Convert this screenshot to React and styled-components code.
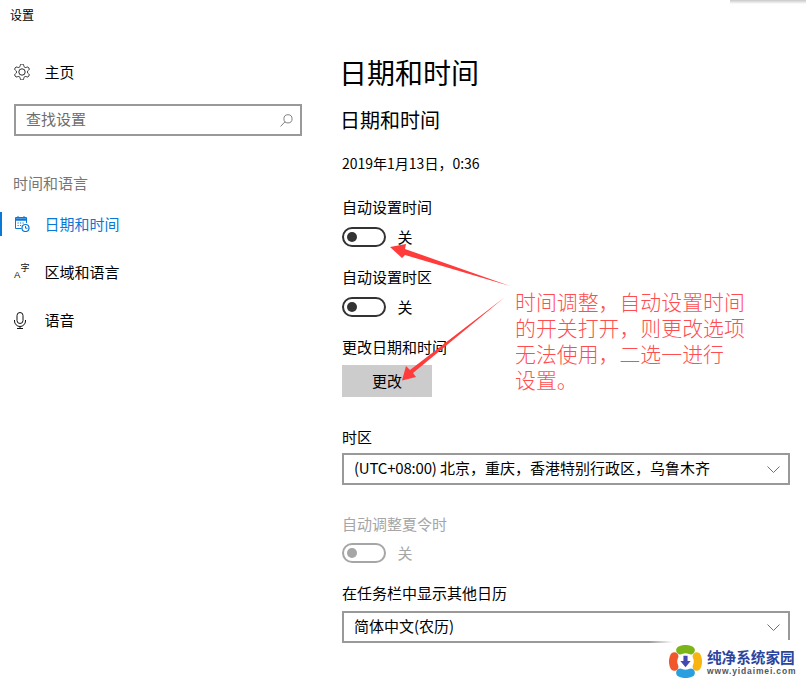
import React from "react";
import styled, { createGlobalStyle } from "styled-components";

const Global = createGlobalStyle`
  html, body { margin: 0; padding: 0; background: #fff; }
  body { font-family: "Noto Sans CJK SC", "Liberation Sans", sans-serif; color: #000; }
  #root { width: 806px; height: 681px; overflow: hidden; position: relative; }
`;

const Page = styled.div`
  display: flex;
  width: 806px;
  height: 681px;
  position: relative;
  overflow: hidden;
  background: #fff;
`;

const Sidebar = styled.aside`
  width: 342px;
  flex: none;
  display: flex;
  flex-direction: column;
`;

const AppTitle = styled.div`
  height: 30px;
  line-height: 30px;
  padding-left: 10px;
  font-size: 12px;
`;

const NavRow = styled.div`
  height: 48px;
  display: flex;
  align-items: center;
  position: relative;
  font-size: 15px;
  color: ${(p) => (p.$active ? "#0a78d7" : "#000")};
  margin-top: ${(p) => p.$mt || 0}px;
`;

const NavIcon = styled.span`
  width: 44.5px;
  padding-left: 14px;
  box-sizing: border-box;
  flex: none;
  display: flex;
  align-items: center;
`;

const NavText = styled.span`
  margin-bottom: 2px;
`;

const ActiveBar = styled.i`
  position: absolute;
  left: 0;
  top: 12px;
  width: 2px;
  height: 24px;
  background: #0a78d7;
`;

const SearchBox = styled.div`
  margin: 8px 0 0 14px;
  width: 288px;
  height: 32px;
  box-sizing: border-box;
  border: 2px solid #999;
  display: flex;
  align-items: center;
  justify-content: space-between;
  padding: 0 7px 0 10px;
  font-size: 15px;
  color: #6d6d6d;
`;

const FieldText = styled.span`
  margin-bottom: 4px;
`;

const SectionLabel = styled.div`
  margin: 35px 0 0 13px;
  height: 24px;
  line-height: 24px;
  font-size: 15px;
  color: #767676;
`;

const LangGlyph = styled.span`
  position: relative;
  display: block;
  width: 16px;
  height: 16px;
  color: #111;
  font-family: "Liberation Sans", sans-serif;
  & > b { position: absolute; left: 0; bottom: 0; font-size: 9.5px; font-weight: 400; line-height: 10px; }
  & > em { position: absolute; left: 6.5px; top: -1px; font-size: 9px; font-style: normal; line-height: 9px; font-family: "Noto Sans CJK SC", sans-serif; }
`;

const Main = styled.main`
  flex: 1;
  display: flex;
  flex-direction: column;
  align-items: flex-start;
`;

const PageTitle = styled.h1`
  margin: 50px 0 0 -3px;
  height: 44px;
  line-height: 44px;
  font-size: 28px;
  font-weight: 400;
`;

const SubTitle = styled.h2`
  margin: 11px 0 0 -2px;
  height: 30px;
  line-height: 30px;
  font-size: 20px;
  font-weight: 400;
`;

const Label = styled.div`
  margin-top: ${(p) => p.$mt}px;
  height: 22px;
  line-height: ${(p) => p.$lh || 21}px;
  font-size: ${(p) => p.$size || 15}px;
  color: ${(p) => (p.$muted ? "#a6a6a6" : "#000")};
  white-space: nowrap;
`;

const ToggleRow = styled.div`
  margin-top: ${(p) => p.$mt}px;
  height: 20px;
  display: flex;
  align-items: center;
  gap: 11.5px;
  font-size: 15px;
  color: ${(p) => (p.$muted ? "#a6a6a6" : "#000")};
`;

const ToggleText = styled.span`
  margin-bottom: 2px;
`;

const Track = styled.span`
  width: 44px;
  height: 20px;
  box-sizing: border-box;
  border: 2px solid ${(p) => (p.$muted ? "#a6a6a6" : "#333")};
  border-radius: 10px;
  display: flex;
  align-items: center;
  padding-left: 3px;
  &::before {
    content: "";
    width: 10px;
    height: 10px;
    border-radius: 50%;
    background: ${(p) => (p.$muted ? "#a6a6a6" : "#333")};
  }
`;

const ChangeButton = styled.div`
  margin-top: 7px;
  width: 90px;
  height: 32px;
  line-height: 32px;
  background: #ccc;
  text-align: center;
  font-size: 15px;
`;

const Select = styled.div`
  margin-top: ${(p) => p.$mt}px;
  width: 448px;
  height: 32px;
  box-sizing: border-box;
  border: 2px solid #999;
  display: flex;
  align-items: center;
  justify-content: space-between;
  padding: 0 8px 0 10px;
  font-size: 15px;
  white-space: nowrap;
`;

const Latin = styled.span`
  letter-spacing: -0.2px;
`;

const Annotation = styled.div`
  position: absolute;
  left: 515px;
  top: 288px;
  font-size: 20.9px;
  line-height: 26px;
  color: #ff4d4f;
  font-weight: 300;
  white-space: pre;
`;

const ArrowLayer = styled.svg`
  position: absolute;
  left: 0;
  top: 0;
  pointer-events: none;
`;

const TopShadow = styled.div`
  position: absolute;
  right: 0;
  top: 0;
  width: 76px;
  height: 4px;
  background: linear-gradient(#c9c9c9, #fff);
`;

const WatermarkMask = styled.div`
  position: absolute;
  right: 0;
  bottom: 0;
  width: 133px;
  height: 41px;
  background: #fff;
  &::before {
    content: "";
    position: absolute;
    right: 100%;
    bottom: 38px;
    width: 24px;
    height: 3px;
    background: linear-gradient(to right, rgba(255, 255, 255, 0), #fff);
  }
`;

const Watermark = styled.div`
  position: absolute;
  left: 669px;
  top: 645px;
  display: flex;
  align-items: center;
  gap: 5px;
`;

const BrandText = styled.div`
  display: flex;
  flex-direction: column;
  margin-top: 1px;
`;

const BrandName = styled.div`
  font-size: 14.6px;
  line-height: 18px;
  font-weight: 700;
  color: #2b459e;
  white-space: nowrap;
`;

const BrandUrl = styled.div`
  font-family: "Liberation Sans", sans-serif;
  font-size: 8.5px;
  line-height: 10px;
  letter-spacing: 0.85px;
  font-weight: 700;
  color: #555;
  white-space: nowrap;
`;

const Gear = () => (
  <svg width="16" height="16" viewBox="2 2 20 20" fill="none" stroke="#222" strokeWidth="1.2" strokeLinejoin="round">
    <path d="M12.2 2h-.44a2 2 0 0 0-2 2v.18a2 2 0 0 1-1 1.73l-.43.25a2 2 0 0 1-2 0l-.15-.08a2 2 0 0 0-2.73.73l-.22.38a2 2 0 0 0 .73 2.73l.15.1a2 2 0 0 1 1 1.72v.51a2 2 0 0 1-1 1.74l-.15.09a2 2 0 0 0-.73 2.73l.22.38a2 2 0 0 0 2.73.73l.15-.08a2 2 0 0 1 2 0l.43.25a2 2 0 0 1 1 1.73V20a2 2 0 0 0 2 2h.44a2 2 0 0 0 2-2v-.18a2 2 0 0 1 1-1.73l.43-.25a2 2 0 0 1 2 0l.15.08a2 2 0 0 0 2.73-.73l.22-.39a2 2 0 0 0-.73-2.73l-.15-.08a2 2 0 0 1-1-1.74v-.5a2 2 0 0 1 1-1.74l.15-.09a2 2 0 0 0 .73-2.73l-.22-.38a2 2 0 0 0-2.73-.73l-.15.08a2 2 0 0 1-2 0l-.43-.25a2 2 0 0 1-1-1.73V4a2 2 0 0 0-2-2z" />
    <circle cx="12" cy="12" r="4" />
  </svg>
);

const SearchIcon = () => (
  <svg width="13" height="13" viewBox="0 0 14 14" fill="none" stroke="#777" strokeWidth="1">
    <circle cx="8.6" cy="5.2" r="4.4" />
    <path d="M5.4 8.4 L0.6 13.4" />
  </svg>
);

const CalendarClock = () => (
  <svg width="16" height="16" viewBox="0 0 16 16" fill="none" stroke="#0a78d7" strokeWidth="1">
    <path d="M7.500 12.500H1.500V1.500h11V7" />
    <path d="M1.500 3.500h11" strokeWidth="2.500" />
    <path d="M4 0v2M10 0v2" />
    <path d="M3.500 7h1.200M6 7h1.200M8.500 7h1.200M3.500 9.500h1.200M6 9.500h1.200" />
    <circle cx="11.500" cy="12" r="3.500" fill="#fff" strokeWidth="1.200" />
    <path d="M11.500 10v2.200h2" />
  </svg>
);

const MicIcon = () => (
  <svg width="12" height="17" viewBox="0 0 12 17" fill="none" stroke="#111" strokeWidth="1">
    <rect x="3" y="0.500" width="6" height="11" rx="3" />
    <path d="M0.500 8v1a5.500 5.500 0 0 0 11 0V8" />
    <path d="M6 14.500v2M3 16.500h6" />
  </svg>
);

const Chevron = () => (
  <svg width="13" height="7" viewBox="0 0 13 7" fill="none" stroke="#6f6f6f" strokeWidth="1">
    <path d="M0.500 0.500 L6.500 6.500 L12.500 0.500" />
  </svg>
);

const Logo = () => (
  <svg width="33" height="33" viewBox="0 0 32 32" fill="none" strokeWidth="8" strokeLinecap="round">
    <path d="M10.930 5.120 A12 12 0 0 1 21.070 5.120" stroke="#7cb518" />
    <path d="M26.880 10.930 A12 12 0 0 1 26.880 21.070" stroke="#f8b50f" />
    <path d="M21.070 26.880 A12 12 0 0 1 10.930 26.880" stroke="#2a9fe0" />
    <path d="M5.120 21.070 A12 12 0 0 1 5.120 10.930" stroke="#f2562b" />
    <path d="M14 10.500h4v5h3l-5 6-5-6h3z" fill="#4349ae" stroke="none" />
  </svg>
);

function Toggle({ mt, muted }) {
  return (
    <ToggleRow $mt={mt} $muted={muted}>
      <Track $muted={muted} />
      <ToggleText>关</ToggleText>
    </ToggleRow>
  );
}

export default function App() {
  return (
    <>
      <Global />
      <Page>
        <Sidebar>
          <AppTitle>设置</AppTitle>
          <NavRow $mt={18}>
            <NavIcon><Gear /></NavIcon>
            <NavText>主页</NavText>
          </NavRow>
          <SearchBox>
            <FieldText>查找设置</FieldText>
            <SearchIcon />
          </SearchBox>
          <SectionLabel>时间和语言</SectionLabel>
          <NavRow $active $mt={5}>
            <ActiveBar />
            <NavIcon><CalendarClock /></NavIcon>
            <NavText>日期和时间</NavText>
          </NavRow>
          <NavRow>
            <NavIcon>
              <LangGlyph><b>A</b><em>字</em></LangGlyph>
            </NavIcon>
            <NavText>区域和语言</NavText>
          </NavRow>
          <NavRow>
            <NavIcon><MicIcon /></NavIcon>
            <NavText>语音</NavText>
          </NavRow>
        </Sidebar>
        <Main>
          <PageTitle>日期和时间</PageTitle>
          <SubTitle>日期和时间</SubTitle>
          <Label $mt={17} $size={14} $lh={22}>2019年1月13日，0:36</Label>
          <Label $mt={22} $lh={22}>自动设置时间</Label>
          <Toggle mt={9} />
          <Label $mt={19} $lh={22}>自动设置时区</Label>
          <Toggle mt={9} />
          <Label $mt={19} $lh={22}>更改日期和时间</Label>
          <ChangeButton>更改</ChangeButton>
          <Label $mt={29} $lh={22}>时区</Label>
          <Select $mt={5}>
            <FieldText><Latin>(UTC+08:00)</Latin> 北京，重庆，香港特别行政区，乌鲁木齐</FieldText>
            <Chevron />
          </Select>
          <Label $mt={28} $muted $lh={22}>自动调整夏令时</Label>
          <Toggle mt={8} muted />
          <Label $mt={19} $lh={22}>在任务栏中显示其他日历</Label>
          <Select $mt={7}>
            <FieldText>简体中文(农历)</FieldText>
            <Chevron />
          </Select>
        </Main>
        <ArrowLayer width="806" height="681" viewBox="0 0 806 681">
          <path d="M390 247 L406 244 L405 249 L510 286 L405 255 L402 258Z" fill="#ff3b3b" />
          <path d="M402 380.500 L406 366 L410 370 L505 297 L413 373 L416 377Z" fill="#ff3b3b" />
        </ArrowLayer>
        <Annotation>{"时间调整，自动设置时间\n的开关打开，则更改选项\n无法使用，二选一进行\n设置。"}</Annotation>
        <TopShadow />
        <WatermarkMask />
        <Watermark>
          <Logo />
          <BrandText>
            <BrandName>纯净系统家园</BrandName>
            <BrandUrl>www.yidaimei.com</BrandUrl>
          </BrandText>
        </Watermark>
      </Page>
    </>
  );
}
